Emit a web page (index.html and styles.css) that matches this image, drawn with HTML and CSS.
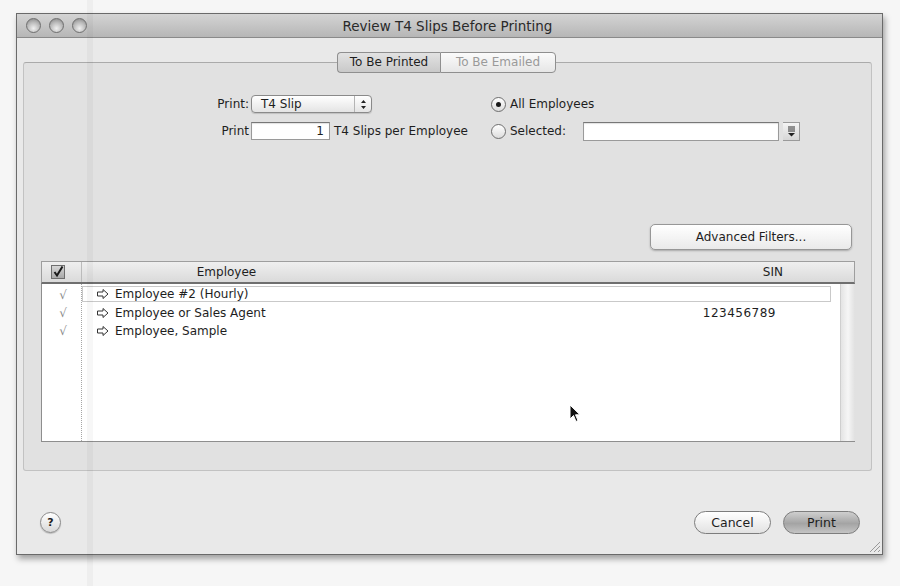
FILE: index.html
```html
<!DOCTYPE html>
<html lang="en">
<head>
    <meta charset="UTF-8">
    <meta name="viewport" content="width=device-width, initial-scale=1.0">
    <title>Review T4 Slips Before Printing</title>
    <link rel="stylesheet" href="styles.css">
</head>
<body>
    <div class="window">
        <div class="titlebar">
            <div class="lights">
                <span class="light"></span>
                <span class="light"></span>
                <span class="light"></span>
            </div>
            <div class="title">Review T4 Slips Before Printing</div>
            <div></div>
        </div>

        <div class="content">
            <div class="tabs">
                <div class="tab active">To Be Printed</div>
                <div class="tab">To Be Emailed</div>
            </div>

            <div class="groupbox">
                <div class="options">
                    <label class="opt-label">Print:</label>
                    <div class="popup">
                        <span class="popup-text">T4 Slip</span>
                        <span class="popup-arrows">
                            <svg width="7" height="11" viewBox="0 0 7 11"><path d="M3.5 1 L6 4 H1 Z M1 7 H6 L3.5 10 Z" fill="#222"/></svg>
                        </span>
                    </div>
                    <div class="radio-row">
                        <span class="radio checked"></span>
                        <span>All Employees</span>
                    </div>

                    <label class="opt-label">Print</label>
                    <div class="copies">
                        <div class="field copies-field">1</div>
                        <span>T4 Slips per Employee</span>
                    </div>
                    <div class="radio-row">
                        <span class="radio"></span>
                        <span>Selected:</span>
                        <div class="field select-field"></div>
                        <div class="combo-btn">
                            <svg width="9" height="11" viewBox="0 0 9 11"><path d="M1 1 H8 M1 3 H8 M1 5 H8" stroke="#333" stroke-width="1"/><path d="M1 7 H8 L4.5 10.5 Z" fill="#222"/></svg>
                        </div>
                    </div>
                </div>

                <div class="filters-row">
                    <button class="push-btn">Advanced Filters...</button>
                </div>

                <div class="table">
                    <div class="table-head">
                        <div class="head-check">
                            <span class="checkbox">
                                <svg width="12" height="12" viewBox="0 0 12 12"><path d="M2.5 6 L5 9.5 L10.5 0.5" stroke="#1a1a1a" stroke-width="2" fill="none"/></svg>
                            </span>
                        </div>
                        <div class="head-name">Employee</div>
                        <div class="head-sin">SIN</div>
                    </div>
                    <div class="table-body">
                        <div class="check-col">
                            <div class="tick">√</div>
                            <div class="tick">√</div>
                            <div class="tick">√</div>
                        </div>
                        <div class="rows-col">
                            <div class="row selected">
                                <svg class="arrow" width="12" height="10" viewBox="0 0 12 10"><path d="M0.5 3 H6 V0.5 L11 5 L6 9.5 V7 H0.5 Z" fill="none" stroke="#333" stroke-width="1"/></svg>
                                <span class="name">Employee #2 (Hourly)</span>
                                <span class="sin"></span>
                            </div>
                            <div class="row">
                                <svg class="arrow" width="12" height="10" viewBox="0 0 12 10"><path d="M0.5 3 H6 V0.5 L11 5 L6 9.5 V7 H0.5 Z" fill="none" stroke="#333" stroke-width="1"/></svg>
                                <span class="name">Employee or Sales Agent</span>
                                <span class="sin">123456789</span>
                            </div>
                            <div class="row">
                                <svg class="arrow" width="12" height="10" viewBox="0 0 12 10"><path d="M0.5 3 H6 V0.5 L11 5 L6 9.5 V7 H0.5 Z" fill="none" stroke="#333" stroke-width="1"/></svg>
                                <span class="name">Employee, Sample</span>
                                <span class="sin"></span>
                            </div>
                        </div>
                        <div class="scrollbar"></div>
                    </div>
                </div>
            </div>

            <div class="footer">
                <button class="help-btn">?</button>
                <div class="footer-buttons">
                    <button class="pill">Cancel</button>
                    <button class="pill default">Print</button>
                </div>
            </div>
        </div>

        <svg class="grip" width="12" height="12" viewBox="0 0 12 12"><path d="M11 1 L1 11 M11 5 L5 11 M11 9 L9 11" stroke="#999" stroke-width="1"/></svg>
    </div>

    <svg class="cursor" width="12" height="19" viewBox="0 0 12 19"><path d="M1 1 V15 L4.5 11.5 L7 17.5 L9 16.5 L6.5 10.8 H11 Z" fill="#111" stroke="#fff" stroke-width="1"/></svg>
    <div class="scan-band"></div>
</body>
</html>
```

FILE: styles.css
```css
* {
    box-sizing: border-box;
}

body {
    margin: 0;
    padding: 13px 0 0 16px;
    width: 900px;
    height: 586px;
    overflow: hidden;
    background-color: #f6f6f6;
    font-family: 'DejaVu Sans', 'Liberation Sans', sans-serif;
    font-size: 12px;
    color: #1e1e1e;
}

button {
    font-family: inherit;
    font-size: 12px;
    color: #1e1e1e;
    padding: 0;
}

.window {
    position: relative;
    width: 867px;
    height: 542px;
    background-color: #e9e9e9;
    border: 1px solid #6a6a6a;
    box-shadow: 2px 4px 6px rgba(0, 0, 0, 0.35);
}

/* title bar */
.titlebar {
    display: grid;
    grid-template-columns: 1fr auto 1fr;
    align-items: center;
    height: 24px;
    background: linear-gradient(#d4d4d4, #b6b6b6);
    border-bottom: 1px solid #8a8a8a;
}

.lights {
    display: flex;
    gap: 8px;
    padding-left: 9px;
}

.light {
    width: 15px;
    height: 15px;
    border-radius: 50%;
    border: 1px solid #6f6f6f;
    background: radial-gradient(circle at 50% 72%, #f0f0f0 0%, #b8b8b8 55%, #7e7e7e 100%);
}

.title {
    color: #2a2a2a;
    font-size: 13.5px;
    padding-right: 4px;
}

/* main area */
.content {
    padding-top: 14px;
}

.tabs {
    position: relative;
    z-index: 1;
    display: flex;
    justify-content: center;
    margin-bottom: -11px;
    padding-right: 6px;
}

.tab {
    height: 21px;
    line-height: 19px;
    padding: 0 10px;
    border: 1px solid #8f8f8f;
    background: linear-gradient(#fbfbfb, #e6e6e6);
    color: #9a9a9a;
}

.tab.active {
    width: 103px;
    text-align: center;
    border-radius: 4px 0 0 4px;
    background: linear-gradient(#e2e2e2, #c9c9c9);
    color: #1e1e1e;
    border-right: none;
}

.tab:last-child {
    width: 116px;
    text-align: center;
    border-radius: 0 4px 4px 0;
}

.groupbox {
    height: 409px;
    margin: 0 10px 0 6px;
    background-color: #e1e1e1;
    border: 1px solid #c2c2c2;
    border-top-color: #aaaaaa;
    border-radius: 3px;
}

/* print options */
.options {
    display: grid;
    grid-template-columns: 35px auto auto;
    grid-template-rows: 18px 18px;
    justify-content: start;
    column-gap: 2px;
    row-gap: 9px;
    align-items: center;
    margin-top: 32px;
    padding-left: 190px;
}

.opt-label {
    text-align: right;
}

.popup {
    display: flex;
    width: 121px;
    height: 18px;
    border: 1px solid #8a8a8a;
    border-radius: 4px;
    background: linear-gradient(#ffffff, #e4e4e4);
    box-shadow: 0 1px 1px rgba(0, 0, 0, 0.15);
}

.popup-text {
    flex: 1;
    line-height: 16px;
    padding-left: 9px;
}

.popup-arrows {
    width: 17px;
    display: flex;
    align-items: center;
    justify-content: center;
    border-left: 1px solid #b4b4b4;
}

.copies {
    display: flex;
    align-items: center;
    gap: 4px;
}

.field {
    height: 18px;
    background-color: #ffffff;
    border: 1px solid #9a9a9a;
    border-top-color: #777;
    box-shadow: inset 0 1px 1px rgba(0, 0, 0, 0.12);
}

.copies-field {
    width: 79px;
    line-height: 16px;
    text-align: right;
    padding-right: 5px;
}

.radio-row {
    display: flex;
    align-items: center;
    gap: 4px;
    margin-left: 21px;
}

.radio {
    display: flex;
    align-items: center;
    justify-content: center;
    width: 15px;
    height: 15px;
    border-radius: 50%;
    border: 1px solid #6e6e6e;
    background: linear-gradient(#ffffff, #dcdcdc);
}

.radio.checked::after {
    content: '';
    width: 5px;
    height: 5px;
    border-radius: 50%;
    background-color: #1a1a1a;
}

.select-field {
    width: 196px;
    height: 19px;
    margin-left: 13px;
}

.combo-btn {
    display: flex;
    align-items: center;
    justify-content: center;
    width: 17px;
    height: 19px;
    border: 1px solid #9a9a9a;
    border-left: none;
    background: linear-gradient(#f4f4f4, #d6d6d6);
}

/* advanced filters */
.filters-row {
    display: flex;
    justify-content: flex-end;
    margin-top: 84px;
    padding-right: 19px;
}

.push-btn {
    width: 202px;
    height: 26px;
    border: 1px solid #979797;
    border-radius: 5px;
    background: linear-gradient(#ffffff, #eaeaea);
    box-shadow: 0 1px 2px rgba(0, 0, 0, 0.25);
}

/* employee table */
.table {
    margin: 11px 16px 0 17px;
}

.table-head {
    display: flex;
    height: 23px;
    background: linear-gradient(#efefef, #dadada);
    border: 1px solid #9e9e9e;
    border-bottom: 2px solid #6f6f6f;
}

.head-check {
    width: 40px;
    display: flex;
    align-items: center;
    padding-left: 9px;
    border-right: 1px solid #bbbbbb;
}

.checkbox {
    display: flex;
    width: 14px;
    height: 14px;
    border: 1px solid #6e6e6e;
    background: linear-gradient(#d6d6d6, #a9a9a9);
}

.head-name {
    width: 289px;
    line-height: 20px;
    text-align: center;
}

.head-sin {
    flex: 1;
    line-height: 20px;
    text-align: right;
    padding-right: 71px;
}

.table-body {
    display: flex;
    height: 158px;
    background-color: #ffffff;
    border-left: 1px solid #8e8e8e;
    border-bottom: 1px solid #8e8e8e;
}

.check-col {
    width: 40px;
    padding-top: 2px;
    border-right: 1px dotted #a6a6a6;
}

.tick {
    height: 18px;
    line-height: 18px;
    text-align: center;
    padding-left: 3px;
    color: #8a8a8a;
}

.rows-col {
    flex: 1;
    padding-top: 2px;
}

.row {
    display: flex;
    align-items: center;
    height: 18px;
    margin-right: 9px;
    padding-left: 14px;
    border: 1px solid transparent;
}

.row.selected {
    height: 16px;
    margin-bottom: 2px;
    border-color: #c9c9c9;
}

.arrow {
    margin-right: 6px;
}

.name {
    flex: 1;
}

.sin {
    padding-right: 54px;
    letter-spacing: 0.5px;
}

.scrollbar {
    width: 15px;
    background: linear-gradient(90deg, #e4e4e4, #f6f6f6 50%, #e0e0e0);
    border-left: 1px solid #cfcfcf;
}

/* footer buttons */
.footer {
    display: flex;
    align-items: center;
    justify-content: space-between;
    padding: 40px 22px 0 23px;
}

.help-btn {
    width: 21px;
    height: 21px;
    border-radius: 50%;
    border: 1px solid #8a8a8a;
    background: linear-gradient(#ffffff, #d8d8d8);
    font-weight: bold;
    font-size: 11px;
    box-shadow: 0 1px 1px rgba(0, 0, 0, 0.2);
}

.footer-buttons {
    display: flex;
    gap: 12px;
}

.pill {
    width: 77px;
    height: 23px;
    border-radius: 12px;
    border: 1px solid #7d7d7d;
    background: linear-gradient(#ffffff, #e2e2e2);
    font-size: 12.5px;
}

.pill.default {
    background: linear-gradient(#cfcfcf, #a4a4a4 55%, #c4c4c4);
}

.grip {
    position: absolute;
    right: 1px;
    bottom: 1px;
}

/* overlays */
.cursor {
    position: absolute;
    left: 569px;
    top: 404px;
}

.scan-band {
    position: absolute;
    left: 87px;
    top: 0;
    width: 6px;
    height: 586px;
    background-color: rgba(0, 0, 0, 0.03);
}
```
